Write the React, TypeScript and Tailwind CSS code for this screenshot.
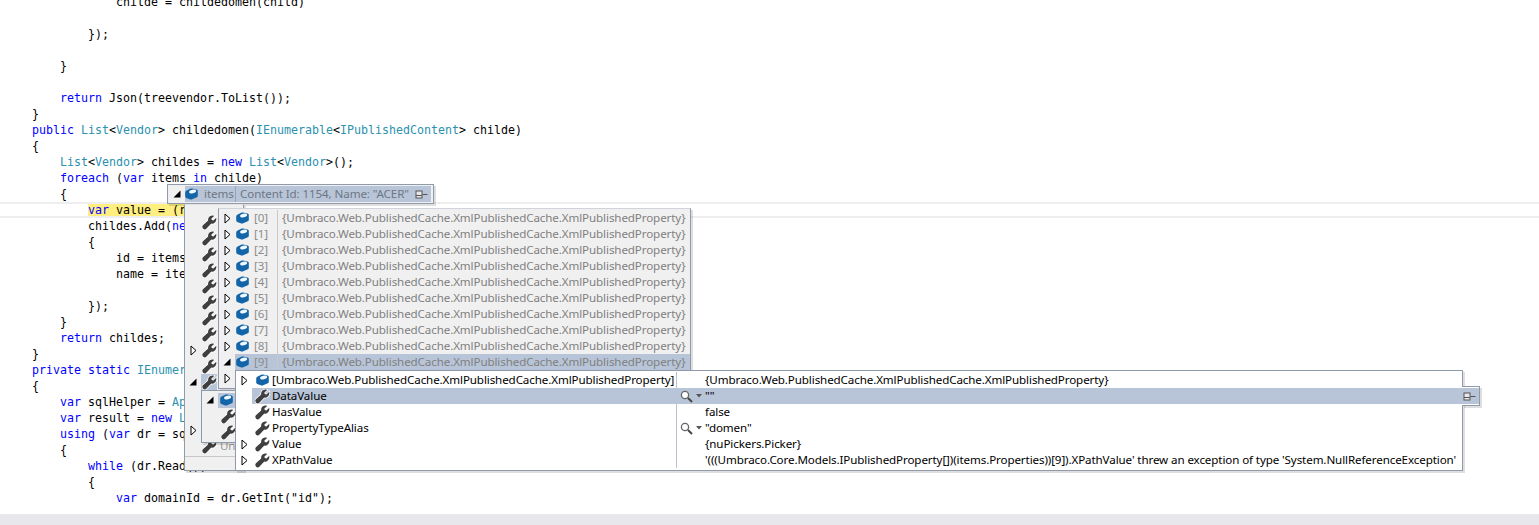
import React from "react";

type Tok = [string, ("k" | "t")?];
const K = "k" as const;
const T = "t" as const;

const codeLines: Tok[][] = [
  [["            childe = childedomen(child)"]],
  [],
  [["        });"]],
  [],
  [["    }"]],
  [],
  [["    "], ["return", K], [" Json(treevendor.ToList());"]],
  [["}"]],
  [["public", K], [" "], ["List", T], ["<"], ["Vendor", T], ["> childedomen("], ["IEnumerable", T], ["<"], ["IPublishedContent", T], ["> childe)"]],
  [["{"]],
  [["    "], ["List", T], ["<"], ["Vendor", T], ["> childes = "], ["new", K], [" "], ["List", T], ["<"], ["Vendor", T], [">();"]],
  [["    "], ["foreach", K], [" ("], ["var", K], [" items "], ["in", K], [" childe)"]],
  [["    {"]],
];
const codeLinesAfter: Tok[][] = [
  [["        childes.Add("], ["new", K], [" "], ["Vendor", T]],
  [["        {"]],
  [["            id = items.Id,"]],
  [["            name = items.Name"]],
  [],
  [["        });"]],
  [["    }"]],
  [["    "], ["return", K], [" childes;"]],
  [["}"]],
  [["private", K], [" "], ["static", K], [" "], ["IEnumerable", T]],
  [["{"]],
  [["    "], ["var", K], [" sqlHelper = "], ["ApplicationContext", T]],
  [["    "], ["var", K], [" result = "], ["new", K], [" "], ["List", T]],
  [["    "], ["using", K], [" ("], ["var", K], [" dr = sqlHelper"]],
  [["    {"]],
  [["        "], ["while", K], [" (dr.Read())"]],
  [["        {"]],
  [["            "], ["var", K], [" domainId = dr.GetInt(\"id\");"]],
];

function CodeLine({ toks }: { toks: Tok[] }) {
  return (
    <div className="h-4 whitespace-pre leading-[17px]">
      {toks.map((t, i) => (
        <span key={i} className={t[1] === "k" ? "text-[#0000ff]" : t[1] === "t" ? "text-[#2b91af]" : "text-black"}>
          {t[0]}
        </span>
      ))}
    </div>
  );
}

function Wrench() {
  return (
    <svg width="15" height="15" viewBox="0 0 16 16" className="block shrink-0">
      <path
        d="M15.2 3 L12.2 5.8 L10.4 5.4 L10 3.7 L13 1 C10.6 0 7.6 1.2 6.8 3.4 C6.4 4.4 6.4 5.2 6.6 5.9 L1 11 C0 12 .2 13.6 1.2 14.6 C2.2 15.6 3.7 15.6 4.6 14.6 L9.9 9 C10.9 9.4 12 9.3 13.1 8.6 C14.8 7.4 15.7 5.2 15.2 3 Z"
        fill="#3f3f3f"
        stroke="#ffffff"
        strokeWidth="1.6"
        paintOrder="stroke"
      />
    </svg>
  );
}

function Cube() {
  return (
    <svg width="13" height="12" viewBox="0 0 13 12" className="block shrink-0">
      <path d="M7 .4 L11.6 1.4 Q12.8 1.8 12.8 3 V7.8 Q12.8 8.8 11.8 9.3 L6.6 11.4 Q6 11.6 5.4 11.4 L1.2 10 Q.2 9.6 .2 8.6 V4.4 Q.2 3.4 1.2 2.8 L5.8 .6 Q6.4 .3 7 .4 Z" fill="#1465a8" />
      <ellipse cx="7.6" cy="3.4" rx="3.6" ry="1.8" fill="#f2f8fd" transform="rotate(-12 7.6 3.4)" />
    </svg>
  );
}

function TriOpen() {
  return (
    <svg width="7" height="11" viewBox="0 0 7 11" className="block shrink-0">
      <path d="M1 1 L6 5.5 L1 10 Z" fill="#ffffff" stroke="#000000" strokeWidth="1" />
    </svg>
  );
}

function TriDown() {
  return (
    <svg width="8" height="8" viewBox="0 0 8 8" className="block shrink-0">
      <path d="M7.5 .5 V7.5 H.5 Z" fill="#000000" />
    </svg>
  );
}

function Pin() {
  return (
    <svg width="13" height="9" viewBox="0 0 13 9" className="block shrink-0">
      <rect x="1" y="1" width="6" height="7" fill="#e8e8e8" stroke="#555555" />
      <path d="M1 5.5 H7" stroke="#555555" />
      <path d="M7.5 4.5 H12.5" stroke="#555555" />
    </svg>
  );
}

function Lens() {
  return (
    <div className="flex shrink-0 items-center gap-[3px]">
      <svg width="13" height="13" viewBox="0 0 13 13" className="block">
        <circle cx="5" cy="5" r="3.6" fill="#ffffff" stroke="#666666" strokeWidth="1.3" />
        <path d="M8 8 L12 12" stroke="#444444" strokeWidth="2" />
      </svg>
      <svg width="6" height="4" viewBox="0 0 6 4" className="block">
        <path d="M0 0 H6 L3 3.5 Z" fill="#555555" />
      </svg>
    </div>
  );
}

const shadow = "shadow-[2px_2px_0_rgba(0,0,0,0.13)]";
const panel = `absolute border border-[#8f9bab] ${shadow}`;

const prop = "{Umbraco.Web.PublishedCache.XmlPublishedCache.XmlPublishedProperty}";
const propB = "[Umbraco.Web.PublishedCache.XmlPublishedCache.XmlPublishedProperty]";

const detail = [
  { tri: true, cube: true, name: propB, value: prop },
  { name: "DataValue", value: "\"\"", lens: true, sel: true },
  { name: "HasValue", value: "false" },
  { name: "PropertyTypeAlias", value: "\"domen\"", lens: true },
  { tri: true, name: "Value", value: "{nuPickers.Picker}" },
  {
    tri: true,
    name: "XPathValue",
    value: "'(((Umbraco.Core.Models.IPublishedProperty[])(items.Properties))[9]).XPathValue' threw an exception of type 'System.NullReferenceException'",
  },
];

export default function App() {
  return (
    <div className="relative flex h-[525px] w-[1539px] flex-col overflow-hidden bg-white">
      <div className="min-h-0 flex-1 overflow-hidden pl-8 font-['DejaVu_Sans_Mono',monospace] text-[11.63px]">
        <div className="-mt-[6px]">
          {codeLines.map((l, i) => (
            <CodeLine key={i} toks={l} />
          ))}
        </div>
        <div className="-ml-8 box-border flex h-4 items-center border-y-2 border-[#eeeeee] pl-[88px]">
          <span className="h-3 whitespace-pre bg-[#ffee80] pr-2 leading-[13px] text-black">
            <span className="text-[#0000ff]">var</span> value = (result)
          </span>
        </div>
        {codeLinesAfter.map((l, i) => (
          <CodeLine key={i} toks={l} />
        ))}
      </div>
      <div className="h-[11px] shrink-0 bg-[#e8e8ec]" />

      <div className="font-['Noto_Sans',sans-serif] text-[11.6px] leading-4 tracking-[-0.105px]">
        {/* header tip */}
        <div className={`${panel} left-[167px] top-[184px] flex h-5 w-[267px] bg-[#f0f0f0]`}>
          <div className="flex w-[17px] shrink-0 items-center justify-center">
            <TriDown />
          </div>
          <div className="my-px mr-[2px] flex flex-1 items-center bg-[#b8c5d8] text-[#6e7683]">
            <div className="flex w-[19px] shrink-0 justify-start">
              <Cube />
            </div>
            <span className="w-[32px] shrink-0 border-r border-[#98a4b5]">items</span>
            <span className="flex-1 whitespace-nowrap pl-[4px]">Content Id: 1154, Name: "ACER"</span>
            <div className="mr-[3px]">
              <Pin />
            </div>
          </div>
        </div>

        {/* second level */}
        <div className={`${panel} left-[184px] top-[204px] h-[267px] w-[60px] border-t-[#e4e4e4] bg-[#f0f0f0]`}>
          <div className="pt-[9px]">
            {Array.from({ length: 15 }).map((_, i) => (
              <div key={i} className="flex h-4 items-center">
                <div className="flex w-4 shrink-0 justify-center">
                  {i === 8 || i === 13 ? <TriOpen /> : i === 10 ? <TriDown /> : null}
                </div>
                <div className={`flex h-4 w-4 shrink-0 items-center justify-center ${i === 10 ? "bg-[#b8c5d8]" : ""}`}>
                  <Wrench />
                </div>
                {i === 14 && <span className="pl-[3px] text-[#999999]">Un</span>}
              </div>
            ))}
          </div>
          <div className="mt-[2px] border-t border-[#c8c8c8]" />
        </div>

        {/* third level */}
        <div className={`${panel} left-[218px] top-[208px] h-[181px] w-[473px] border-t-[#d0d4da] bg-[#f0f0f0] pt-px`}>
          {Array.from({ length: 11 }).map((_, i) =>
            i < 10 ? (
              <div key={i} className="flex h-4 items-center">
                <div className="flex w-4 shrink-0 justify-center">{i === 9 ? <TriDown /> : <TriOpen />}</div>
                <div className={`flex h-4 flex-1 items-center ${i === 9 ? "bg-[#b8c5d8]" : ""}`}>
                  <div className="flex w-[19px] shrink-0 pl-[1px]">
                    <Cube />
                  </div>
                  <span className="w-[23px] shrink-0 text-[#8c8c8c]">[{i}]</span>
                  <span className="h-4 whitespace-nowrap border-l border-[#c8c8c8] pl-[4px] text-[#808080]">{prop}</span>
                </div>
              </div>
            ) : (
              <div key={i} className="flex h-4 items-center">
                <div className="flex w-4 shrink-0 justify-center">
                  <TriOpen />
                </div>
              </div>
            )
          )}
        </div>

        {/* small fourth level */}
        <div className={`${panel} left-[201px] top-[390px] h-[53px] w-[60px] bg-[#f0f0f0] pt-px`}>
          <div className="flex h-4 items-center">
            <div className="flex w-4 shrink-0 justify-center">
              <TriDown />
            </div>
            <div className="flex h-[15px] w-[17px] shrink-0 items-center justify-center bg-[#b8c5d8]">
              <Cube />
            </div>
          </div>
          <div className="flex h-4 items-center pl-[19px]">
            <Wrench />
          </div>
          <div className="flex h-4 items-center pl-[19px]">
            <Wrench />
          </div>
        </div>

        {/* detail level */}
        <div className={`${panel} left-[235px] top-[370px] h-[101px] w-[1228px] bg-white pt-px text-black`}>
          {detail.map((r) => (
            <div key={r.name} className="flex h-4 items-center">
              <div className="flex w-4 shrink-0 justify-center">{r.tri ? <TriOpen /> : null}</div>
              <div className={`flex h-4 flex-1 items-center ${r.sel ? "-mr-[16px] bg-[#b8c5d8]" : ""}`}>
                <div className="flex w-5 shrink-0 justify-center">{r.cube ? <Cube /> : <Wrench />}</div>
                <span className={`h-4 w-[405px] shrink-0 whitespace-nowrap border-r ${r.sel ? "border-transparent" : "border-[#b9c2cf]"}`}>
                  {r.name}
                </span>
                <div className="flex w-7 shrink-0 pl-[3px]">{r.lens ? <Lens /> : null}</div>
                <span className="min-w-0 flex-1 whitespace-nowrap">{r.value}</span>
                {r.sel && (
                  <div className="mr-[3px]">
                    <Pin />
                  </div>
                )}
              </div>
            </div>
          ))}
        </div>
        <div className={`absolute left-[1462px] top-[386px] h-5 w-[18px] border-y border-r border-[#8f9bab] bg-white ${shadow}`}>
          <div className="mt-px flex h-4 items-center justify-end bg-[#b8c5d8] pr-[3px]">
            <Pin />
          </div>
        </div>
      </div>
    </div>
  );
}
